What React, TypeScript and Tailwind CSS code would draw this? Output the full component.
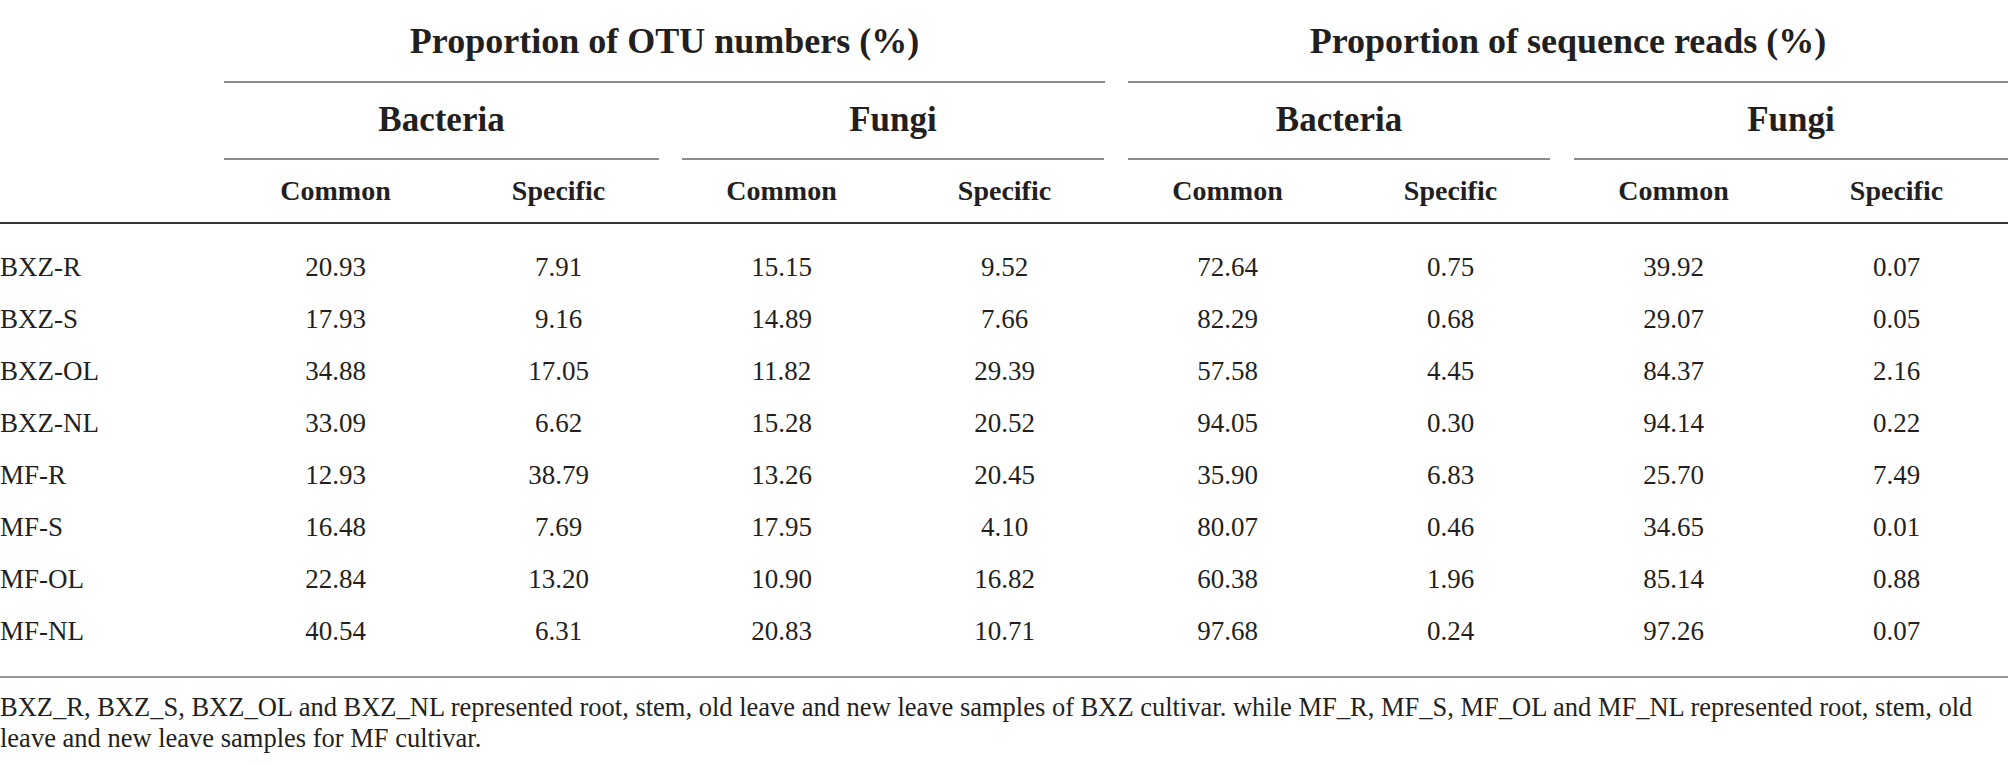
const rows: [string, string[]][] = [
  ["BXZ-R", ["20.93", "7.91", "15.15", "9.52", "72.64", "0.75", "39.92", "0.07"]],
  ["BXZ-S", ["17.93", "9.16", "14.89", "7.66", "82.29", "0.68", "29.07", "0.05"]],
  ["BXZ-OL", ["34.88", "17.05", "11.82", "29.39", "57.58", "4.45", "84.37", "2.16"]],
  ["BXZ-NL", ["33.09", "6.62", "15.28", "20.52", "94.05", "0.30", "94.14", "0.22"]],
  ["MF-R", ["12.93", "38.79", "13.26", "20.45", "35.90", "6.83", "25.70", "7.49"]],
  ["MF-S", ["16.48", "7.69", "17.95", "4.10", "80.07", "0.46", "34.65", "0.01"]],
  ["MF-OL", ["22.84", "13.20", "10.90", "16.82", "60.38", "1.96", "85.14", "0.88"]],
  ["MF-NL", ["40.54", "6.31", "20.83", "10.71", "97.68", "0.24", "97.26", "0.07"]],
];

const groups = [
  { name: "Bacteria", line: "mr-[11px]" },
  { name: "Fungi", line: "mx-[12px]" },
  { name: "Bacteria", line: "mx-[12px]" },
  { name: "Fungi", line: "ml-[12px]" },
];

export default function App() {
  return (
    <div className="w-[2008px] h-[766px] bg-white text-[#231f20] font-['Liberation_Serif',serif] overflow-hidden">
      {/* header */}
      <div className="grid grid-cols-[224px_repeat(8,1fr)]">
        <div className="row-span-3" />
        <div className="col-span-4 mr-[11px] h-[83px] flex items-center justify-center border-b-2 border-[#8c8c8c] text-[36px] font-bold">
          Proportion of OTU numbers (%)
        </div>
        <div className="col-span-4 ml-[12px] h-[83px] flex items-center justify-center border-b-2 border-[#8c8c8c] text-[36px] font-bold">
          Proportion of sequence reads (%)
        </div>
        {groups.map((g, i) => (
          <div
            key={i}
            className={`col-span-2 ${g.line} h-[77px] flex items-center justify-center border-b-2 border-[#8c8c8c] text-[35px] font-bold`}
          >
            {g.name}
          </div>
        ))}
        {groups.map((g, i) => (
          <div key={i} className="col-span-2 grid grid-cols-2">
            <div className="h-[62px] flex items-center justify-center text-[28px] font-bold">Common</div>
            <div className="h-[62px] flex items-center justify-center text-[28px] font-bold">Specific</div>
          </div>
        ))}
      </div>
      <div className="h-[2px] bg-[#333333]" />

      {/* body */}
      <div className="pt-[17px] pb-[19px] border-b-2 border-[#999999]">
        {rows.map(([label, vals]) => (
          <div key={label} className="grid grid-cols-[224px_repeat(8,1fr)] h-[52px] items-center text-[27px]">
            <div>{label}</div>
            {vals.map((v, i) => (
              <div key={i} className="text-center">
                {v}
              </div>
            ))}
          </div>
        ))}
      </div>

      {/* footnote */}
      <p className="mt-[14px] text-[26.5px] leading-[31px]">
        BXZ_R, BXZ_S, BXZ_OL and BXZ_NL represented root, stem, old leave and new leave samples of BXZ cultivar. while
        MF_R, MF_S, MF_OL and MF_NL represented root, stem, old leave and new leave samples for MF cultivar.
      </p>
    </div>
  );
}
